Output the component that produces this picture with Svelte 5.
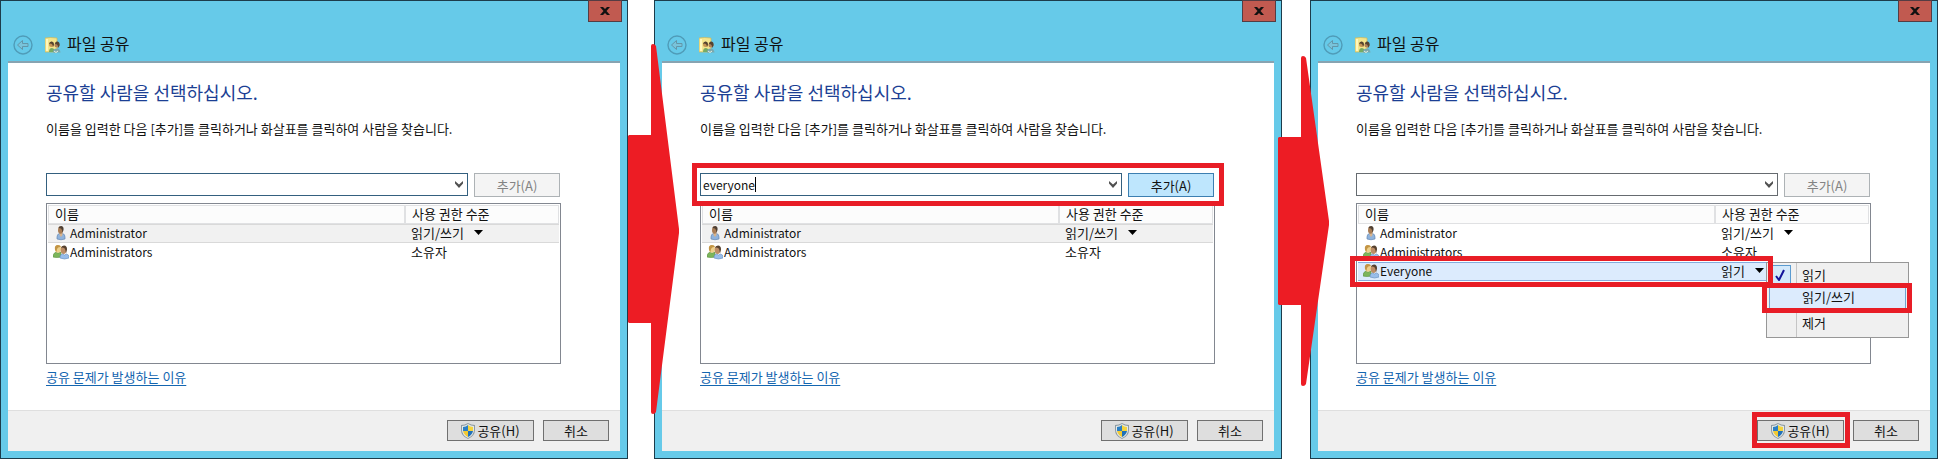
<script>
	const admin = { name: 'Administrator', level: '읽기/쓰기', icon: 'user', menu: true };
	const admins = { name: 'Administrators', level: '소유자', icon: 'group' };
	const everyone = { name: 'Everyone', level: '읽기', icon: 'group', menu: true };

	const steps = [
		{ id: 'start', value: '', rows: [{ ...admin, state: 'hover' }, admins] },
		{ id: 'add', value: 'everyone', rows: [{ ...admin, state: 'hover' }, admins] },
		{ id: 'level', value: '', rows: [admin, admins, { ...everyone, state: 'selected' }] },
	];
</script>

{#snippet userIcon()}
	<svg class="icon" width="16" height="16" viewBox="0 0 16 16" aria-hidden="true">
		<path d="M4 14v-2q0-3 2.500-3.500h3q2.500.5 2.500 3.500v2q-4 1.500-8 0z" fill="#8fb3dd" stroke="#6488b3" stroke-width=".7" />
		<path d="M6.500 8h3v2L8 12 6.500 10z" fill="#d8b48c" />
		<ellipse cx="7.500" cy="5" rx="2.500" ry="3.800" fill="#a97d55" />
		<path d="M5.500 3Q6 1 8.500 1 11 1.500 10.500 5L9.500 8Q9.500 4.500 8 3.500z" fill="#4f4034" />
	</svg>
{/snippet}

{#snippet groupIcon()}
	<svg class="icon" width="16" height="16" viewBox="0 0 16 16" aria-hidden="true">
		<path d="M0 13q0-4 3-5l2 1 3-1v5q-4 1-8 0z" fill="#7cb55b" stroke="#5c923f" stroke-width=".6" />
		<ellipse cx="5" cy="5" rx="3" ry="3.800" fill="#eed08b" />
		<path d="M2 6Q1 1 5 1q2.500 0 3 2Q5 2.500 4 5L3.500 8z" fill="#c39545" />
		<ellipse cx="10.500" cy="6" rx="2.800" ry="4" fill="#bd8d66" />
		<path d="M8 4Q8.500 1.500 11 1.500q3.200.3 3 4l-1 4Q13 6 11.500 4.300 9.500 3 8 4z" fill="#56412e" />
		<path d="M7 14v-1q0-2.500 2.500-3l2 1 2-1q2.500.5 2.500 3v1q-4.500 2-9 0z" fill="#98bdea" stroke="#668fbd" stroke-width=".6" />
	</svg>
{/snippet}

{#snippet arrow(className, height, top, bottom)}
	<svg class="arrow {className}" width="51" {height} viewBox="0 0 51 {height}" aria-hidden="true">
		<path d="M1 {top}H23V2Q23 0 25 0Q27 0 28 2L51 {height / 2}V{height / 2 + 4}L28 {height - 2}Q27 {height} 25 {height}Q23 {height} 23 {height - 2}V{bottom}H1L0 {bottom - 1}V{top + 1}z" fill="#ed1c24" />
	</svg>
{/snippet}

<main>
	{#each steps as step, i}
		{#if i === 1}
			<div class="gutter">{@render arrow('first', 370, 91, 279)}</div>
		{:else if i === 2}
			<div class="gutter wide">{@render arrow('second', 330, 81, 249)}</div>
		{/if}

		<section class="window">
			<header>
				<button class="back" type="button" aria-label="뒤로" disabled>
					<svg width="20" height="20" viewBox="0 0 20 20" fill="none" stroke="#4f9cb8">
						<circle cx="10" cy="10" r="9" stroke-width="1.400" />
						<path d="M4.500 10 9.500 5.500V8.500H15v3H9.500v3z" fill="#79c3da" stroke="#6296a9" />
					</svg>
				</button>
				<svg class="icon" width="16" height="16" viewBox="0 0 16 16" aria-hidden="true">
					<path d="M0 1q5-1 12 0v14H0z" fill="#f4e58d" stroke="#cdb75a" stroke-width=".7" />
					<path d="M1 2h2v12H1z" fill="#fff7bd" />
					<path d="M4 15q0-4 3-4 2 0 3 3v1z" fill="#78ab63" />
					<path d="M8 15.500q0-4 3.500-4t4 4z" fill="#79a8ae" />
					<circle cx="6.500" cy="7.500" r="2.500" fill="#c69654" />
					<circle cx="12" cy="8" r="2.500" fill="#b18159" />
					<path d="M4 7q.5-3 3-2.500 2 .5 2 3l-1 2.500Q8 7 6 6.500zM10 7q0-3 2.500-2.500 2.500.5 2 4L13 11q.5-4-3-4z" fill="#544330" />
					<path d="M9 14l2 1.500L13 14" stroke="#e7efe2" fill="none" />
				</svg>
				<h1>파일 공유</h1>
				<button class="close" type="button" aria-label="닫기">
					<svg width="10" height="8" viewBox="0 0 10 8">
						<path d="M0 0h3l2 2 2-2h3L6.500 4 10 8H7L5 6 3 8H0l3.500-4z" fill="#111" />
					</svg>
				</button>
			</header>

			<div class="client">
				<div class="content">
					<h2>공유할 사람을 선택하십시오.</h2>
					<label for="name-{step.id}">이름을 입력한 다음 [추가]를 클릭하거나 화살표를 클릭하여 사람을 찾습니다.</label>

					<div class="entry">
						<div class="combo" class:plain={step.id === 'level'}>
							<input id="name-{step.id}" class:typed={step.value} type="text" value={step.value} autocomplete="off" />
							{#if step.value}<span class="caret"></span>{/if}
							<button type="button" aria-label="목록 열기">
								<svg width="8" height="7" viewBox="0 0 8 7">
									<path d="M0 0l4 3.500L8 0v2.500L4 7 0 2.500z" fill="#505050" />
								</svg>
							</button>
						</div>
						<button class="add" type="button" disabled={!step.value}>추가(A)</button>
						{#if step.id === 'add'}<span class="mark mark-entry"></span>{/if}
					</div>

					<div class="list">
						<table>
							<thead>
								<tr><th>이름</th><th class="level">사용 권한 수준</th></tr>
							</thead>
							<tbody>
								{#each step.rows as row}
									<tr class={row.state}>
										<td>
											<span class="name">
												{#if row.icon === 'user'}{@render userIcon()}{:else}{@render groupIcon()}{/if}
												{row.name}
											</span>
										</td>
										<td class="level">
											{#if row.menu}
												<button class="pick" type="button">
													{row.level}
													<svg width="9" height="5" viewBox="0 0 9 5"><path d="M0 0h9L4.500 5z" /></svg>
												</button>
											{:else}
												{row.level}
											{/if}
											{#if row.state === 'selected'}
												<div class="menu" role="menu">
													<button type="button" role="menuitemradio" aria-checked="true">
														<span class="tick">
															<svg width="10" height="12" viewBox="0 0 10 12"><path d="M1 7l3 4L9 1" fill="none" stroke="#14149a" stroke-width="2" /></svg>
														</span>
														<span class="option">읽기</span>
													</button>
													<button class="active" type="button" role="menuitemradio" aria-checked="false">
														<span class="tick"></span>
														<span class="option">읽기/쓰기</span>
														<span class="mark mark-option"></span>
													</button>
													<hr />
													<button type="button" role="menuitem">
														<span class="tick"></span>
														<span class="option">제거</span>
													</button>
												</div>
											{/if}
										</td>
									</tr>
								{/each}
							</tbody>
						</table>
						{#if step.id === 'level'}<span class="mark mark-row"></span>{/if}
					</div>

					<a href="#help">공유 문제가 발생하는 이유</a>
				</div>

				<footer>
					<button class="share" type="button">
						<svg width="14" height="16" viewBox="0 0 14 16" aria-hidden="true">
							<path d="M7 0q3 2 7 2v5q0 6-7 9Q0 13 0 7V2q4 0 7-2z" fill="#8d9aa1" />
							<path d="M7 1q3 2 6 2v4q0 5-6 8-6-3-6-8V3q3 0 6-2z" fill="#e4e9e8" />
							<path d="M7 2v6H2V4q3 0 5-2z" fill="#2b7fc4" />
							<path d="M7 2q2 2 5 2v4H7z" fill="#f4d43d" />
							<path d="M2 8h5v6Q3 12 2 8z" fill="#f1c934" />
							<path d="M7 8h5q-1 4-5 6z" fill="#1f70b8" />
						</svg>
						공유(H)
						{#if step.id === 'level'}<span class="mark mark-share"></span>{/if}
					</button>
					<button class="cancel" type="button">취소</button>
				</footer>
			</div>
		</section>
	{/each}
</main>

<style>
	:global(body) {
		margin: 0;
		background: #fff;
	}

	main {
		display: flex;
		font: 13px/19px "Noto Sans CJK KR", sans-serif;
		color: #111;
	}

	* {
		box-sizing: border-box;
	}

	button,
	input {
		font: inherit;
		color: inherit;
		margin: 0;
		padding: 0;
	}

	svg {
		display: block;
		flex: none;
	}

	.gutter {
		position: relative;
		z-index: 2;
		flex: none;
		width: 26px;
	}

	.gutter.wide {
		width: 28px;
	}

	.arrow {
		position: absolute;
	}

	.first {
		top: 44px;
		left: 0;
	}

	.second {
		top: 56px;
		left: -4px;
	}

	.window {
		flex: 1;
		min-width: 0;
		padding: 0 7px 7px;
		border: 1px solid #1c3c4b;
		background: #66cae9;
	}

	header {
		position: relative;
		display: flex;
		align-items: center;
		height: 60px;
		padding: 27px 0 0 5px;
	}

	.back {
		width: 20px;
		height: 20px;
		margin-right: 12px;
		border: 0;
		background: none;
	}

	h1 {
		margin: 0 0 0 6px;
		padding-bottom: 3px;
		font-size: 16px;
		font-weight: 400;
		line-height: 20px;
	}

	.close {
		position: absolute;
		top: -1px;
		right: -2px;
		display: flex;
		align-items: center;
		justify-content: center;
		width: 34px;
		height: 22px;
		border: 1px solid #553c43;
		background: #c15a50;
	}

	.client {
		border-top: 2px solid #87a3b1;
		background: #fff;
	}

	.content {
		display: flex;
		flex-direction: column;
		align-items: flex-start;
		padding: 17px 59px 23px 38px;
	}

	h2 {
		margin: 0 0 15px;
		font-size: 18px;
		font-weight: 400;
		line-height: 24px;
		color: #1c3f94;
	}

	label {
		margin-bottom: 34px;
		line-height: 20px;
	}

	.entry {
		position: relative;
		z-index: 1;
		display: flex;
		gap: 6px;
		align-self: stretch;
		margin-bottom: 6px;
		padding-right: 1px;
	}

	.combo {
		display: flex;
		flex: 1;
		align-items: center;
		height: 23px;
		padding-left: 2px;
		border: 1px solid #34607f;
		background: #fff;
	}

	.plain {
		border-color: #666b70;
	}

	.combo input {
		flex: 1;
		min-width: 0;
		height: 19px;
		border: 0;
		outline: 0;
		background: none;
		font-size: 12px;
	}

	.combo input.typed {
		flex: none;
		field-sizing: content;
	}

	.caret {
		width: 1px;
		height: 15px;
		background: #000;
	}

	.combo button {
		display: flex;
		align-items: center;
		justify-content: center;
		width: 17px;
		height: 21px;
		margin-left: auto;
		border: 0;
		background: none;
	}

	.add {
		width: 86px;
		height: 24px;
		border: 1px solid #3c7fb1;
		background: #bee6fd;
	}

	.add:disabled {
		border-color: #adb2b5;
		background: #f4f4f4;
		color: #838383;
	}

	.list {
		position: relative;
		align-self: stretch;
		min-height: 161px;
		margin-bottom: 3px;
		padding: 1px;
		border: 1px solid #828790;
	}

	table {
		width: 100%;
		border-spacing: 0;
		table-layout: fixed;
	}

	th,
	td {
		height: 19px;
		padding: 0 0 2px 5px;
		border: solid transparent;
		border-width: 1px 0;
		font-weight: 400;
		line-height: 15px;
		text-align: left;
		white-space: nowrap;
	}

	th {
		padding-left: 6px;
		border: 1px solid #e0e1e3;
		background: #fcfcfc;
	}

	.level {
		position: relative;
		width: 154px;
		padding-left: 6px;
	}

	.hover td {
		border-color: #d9d9d9;
		background: #f1f1f1;
	}

	.selected td {
		border-color: #84acdd;
		background: #dcebfd;
	}

	.name {
		display: flex;
		align-items: center;
		gap: 1px;
		height: 15px;
		font-size: 12px;
	}

	.pick {
		display: flex;
		align-items: center;
		gap: 10px;
		border: 0;
		background: none;
	}

	.menu {
		position: absolute;
		top: -1px;
		left: 51px;
		width: 143px;
		padding: 2px;
		border: 1px solid #979797;
		background: linear-gradient(90deg, transparent 29px, #c5c5c5 29px, #c5c5c5 30px, transparent 30px) #f0f0f0;
	}

	.menu button {
		position: relative;
		display: flex;
		align-items: center;
		width: 100%;
		height: 22px;
		padding-bottom: 3px;
		border: 0;
		background: none;
	}

	.menu button.active {
		border: solid #6fa3cf;
		border-width: 0 1px;
		background: #dcebfd;
	}

	.active .option {
		margin-left: 10px;
	}

	.tick {
		display: flex;
		align-items: center;
		justify-content: center;
		width: 22px;
		height: 19px;
	}

	[aria-checked="true"] .tick {
		border: 1px solid #5b9bd0;
		background: #d3e9fb;
	}

	.option {
		margin-left: 11px;
	}

	hr {
		height: 4px;
		margin: 0;
		border: 0;
	}

	a {
		line-height: 20px;
		color: #1466b0;
		text-underline-offset: 3px;
	}

	footer {
		display: flex;
		justify-content: flex-end;
		gap: 9px;
		padding: 9px 11px 10px;
		border-top: 1px solid #dfdfdf;
		background: #f0f0f0;
	}

	footer button {
		position: relative;
		display: flex;
		align-items: center;
		justify-content: center;
		gap: 2px;
		height: 21px;
		border: 1px solid #707070;
		background: #dedede;
	}

	.share {
		width: 87px;
	}

	.cancel {
		width: 66px;
	}

	/* red call-outs laid over the dialog */
	.mark {
		position: absolute;
		z-index: 3;
		border: 5px solid #e81d26;
		pointer-events: none;
	}

	.mark-entry {
		inset: -10px -9px -9px -8px;
	}

	.mark-row {
		top: 52px;
		left: -7px;
		right: 97px;
		height: 31px;
	}

	.mark-option {
		inset: -4px -7px -4px -8px;
	}

	.mark-share {
		inset: -9px -7px -8px -6px;
	}
</style>
